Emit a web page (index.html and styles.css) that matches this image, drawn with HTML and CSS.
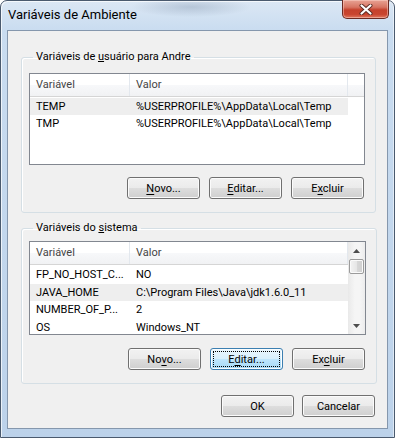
FILE: index.html
```html
<!DOCTYPE html>
<html lang="pt-BR">
<head>
<meta charset="utf-8">
<title>Variáveis de Ambiente</title>
<link rel="stylesheet" href="styles.css">
</head>
<body>
<div class="window">
  <div class="titlebar">
    <span class="title">Variáveis de Ambiente</span>
    <button class="close" aria-label="Fechar">
      <svg width="14" height="11" viewBox="0 0 14 11">
        <path d="M2.5 1.5 L11.5 9.5 M11.5 1.5 L2.5 9.5" stroke="#5a2a22" stroke-width="4" stroke-linecap="round"/>
        <path d="M2.5 1.5 L11.5 9.5 M11.5 1.5 L2.5 9.5" stroke="#ffffff" stroke-width="2.2" stroke-linecap="round"/>
      </svg>
    </button>
  </div>
  <div class="client">
    <fieldset class="group group-user">
      <legend>Variáveis de <u>u</u>suário para Andre</legend>
      <div class="list list-user">
        <div class="lv-main">
          <div class="lv-header">
            <div class="hc c1">Variável</div>
            <div class="hc c2">Valor</div>
          </div>
          <div class="lv-body">
            <div class="row sel"><span class="c1">TEMP</span><span class="c2">%USERPROFILE%\AppData\Local\Temp</span></div>
            <div class="row"><span class="c1">TMP</span><span class="c2">%USERPROFILE%\AppData\Local\Temp</span></div>
          </div>
        </div>
      </div>
      <div class="btnrow">
        <button class="btn"><u>N</u>ovo...</button>
        <button class="btn"><u>E</u>ditar...</button>
        <button class="btn">E<u>x</u>cluir</button>
      </div>
    </fieldset>

    <fieldset class="group group-sys">
      <legend>Variáveis do <u>s</u>istema</legend>
      <div class="list list-sys">
        <div class="lv-main">
          <div class="lv-header">
            <div class="hc c1">Variável</div>
            <div class="hc c2">Valor</div>
          </div>
          <div class="lv-body">
            <div class="row"><span class="c1">FP_NO_HOST_C...</span><span class="c2">NO</span></div>
            <div class="row sel"><span class="c1">JAVA_HOME</span><span class="c2">C:\Program Files\Java\jdk1.6.0_11</span></div>
            <div class="row"><span class="c1">NUMBER_OF_P...</span><span class="c2">2</span></div>
            <div class="row"><span class="c1">OS</span><span class="c2">Windows_NT</span></div>
          </div>
        </div>
        <div class="scrollbar">
          <div class="sb-arrow">
            <svg width="7" height="4" viewBox="0 0 7 4"><path d="M0 4 L3.5 0 L7 4 Z" fill="#4d4d4d"/></svg>
          </div>
          <div class="sb-track">
            <div class="sb-thumb"></div>
          </div>
          <div class="sb-arrow">
            <svg width="7" height="4" viewBox="0 0 7 4"><path d="M0 0 L7 0 L3.5 4 Z" fill="#4d4d4d"/></svg>
          </div>
        </div>
      </div>
      <div class="btnrow">
        <button class="btn">No<u>v</u>o...</button>
        <button class="btn focus">E<u>d</u>itar...</button>
        <button class="btn">Ex<u>c</u>luir</button>
      </div>
    </fieldset>

    <div class="dlg-buttons">
      <button class="btn">OK</button>
      <button class="btn">Cancelar</button>
    </div>
  </div>
</div>
</body>
</html>
```

FILE: styles.css
```css
html, body {
  margin: 0;
  padding: 0;
  background: #ffffff;
}

body {
  font-family: Roboto, "Open Sans", sans-serif;
  font-size: 11px;
  color: #000;
}

.window {
  width: 395px;
  height: 438px;
  box-sizing: border-box;
  border: 1px solid #4a5a6e;
  border-radius: 7px 7px 0 0;
  background:
    radial-gradient(ellipse 60px 10px at 190px 6px, rgba(120,140,165,0.35), rgba(120,140,165,0) 100%),
    linear-gradient(180deg, #dbe7f4 0px, #c9dcf0 30px, #bcd2ea 100%);
  box-shadow: inset 1px 1px 0 rgba(255,255,255,0.7), inset -1px 0 0 rgba(255,255,255,0.5);
  display: flex;
  flex-direction: column;
}

.titlebar {
  height: 29px;
  display: flex;
  align-items: flex-start;
  justify-content: space-between;
}

.title {
  font-size: 13px;
  padding: 6px 0 0 7px;
  color: #000;
}

.close {
  width: 47px;
  height: 19px;
  margin: -1px 5px 0 0;
  padding: 0;
  border: 1px solid #6b2a22;
  border-top: none;
  border-radius: 0 0 5px 5px;
  background: linear-gradient(180deg, #e8a394 0%, #d77563 40%, #c5412c 55%, #c9452f 80%, #e0785f 100%);
  box-shadow: inset 0 0 0 1px rgba(255,220,210,0.45);
  display: flex;
  align-items: center;
  justify-content: center;
}

.client {
  flex: 1;
  margin: 0 6px 8px 6px;
  border: 1px solid #8597ad;
  background: #f0f0f0;
  display: flex;
  flex-direction: column;
  padding: 18px 11px 11px 13px;
}

.group {
  margin: 0;
  padding: 0 10px 13px 7px;
  border: 1px solid #d5dfe5;
  border-radius: 3px;
  box-shadow: inset 1px 1px 0 #ffffff;
}

.group legend {
  margin-left: 4px;
  padding: 0 3px;
  line-height: 16px;
  color: #000;
}

.group-sys {
  margin-top: 7px;
}

.list {
  background: #ffffff;
  border: 1px solid #828790;
  display: flex;
}

.list-user {
  margin-top: 8px;
  height: 90px;
}

.list-sys {
  margin-top: 5px;
  height: 92px;
  overflow: hidden;
}

.lv-main {
  flex: 1;
  overflow: hidden;
}

.lv-header {
  display: flex;
  height: 22px;
  border-bottom: 1px solid #d5d5d5;
  background: linear-gradient(180deg, #ffffff 0%, #ffffff 50%, #f7f8fa 50%, #f1f2f4 100%);
}

.hc {
  box-sizing: border-box;
  padding-left: 6px;
  line-height: 22px;
  color: #444444;
  border-right: 1px solid #e3e8ee;
}

.c1 {
  width: 100px;
  box-sizing: border-box;
  padding-left: 6px;
}

.c2 {
  width: 218px;
  box-sizing: border-box;
  padding-left: 6px;
}

.lv-body {
  padding-top: 1px;
}

.row {
  display: flex;
  width: 318px;
  height: 17px;
  line-height: 17px;
  white-space: nowrap;
}

.row.sel {
  background: #eeeeee;
}

.list-sys .row {
  height: 17.5px;
  line-height: 17.5px;
}

.scrollbar {
  width: 17px;
  display: flex;
  flex-direction: column;
  background: linear-gradient(90deg, #e9e9e9, #f5f5f5 40%, #f5f5f5 70%, #ececec);
}

.sb-arrow {
  height: 17px;
  display: flex;
  align-items: center;
  justify-content: center;
}

.sb-track {
  flex: 1;
}

.sb-thumb {
  height: 15px;
  margin: 0 1px;
  border: 1px solid #9b9b9b;
  border-radius: 2px;
  background: linear-gradient(90deg, #f3f3f3, #e6e6e6 50%, #d8d8d8 50%, #cfcfcf);
  box-shadow: inset 0 0 0 1px #fafafa;
  box-sizing: border-box;
}

.btnrow {
  margin-top: 12px;
  display: flex;
  justify-content: flex-end;
  gap: 9px;
  padding-right: 1px;
}

.group-sys .btnrow {
  margin-top: 13px;
}

.btn {
  width: 73px;
  height: 22px;
  padding: 0;
  font-family: inherit;
  font-size: 11px;
  color: #000;
  border: 1px solid #707070;
  border-radius: 3px;
  background: linear-gradient(180deg, #f2f2f2 0%, #ebebeb 48%, #dddddd 52%, #cfcfcf 100%);
  box-shadow: inset 0 0 0 1px #fbfbfb;
}

.btn u {
  text-underline-offset: 2px;
}

.btn.focus {
  border-color: #3c7fb1;
  background: linear-gradient(180deg, #eaf6fd 0%, #d9f0fc 48%, #bee6fd 52%, #a7d9f5 100%);
  box-shadow: inset 0 0 0 1px #fbfdfe;
  outline: 1px dotted #000;
  outline-offset: -4px;
}

.dlg-buttons {
  margin-top: auto;
  display: flex;
  justify-content: flex-end;
  gap: 8px;
  padding-right: 1px;
}

.dlg-buttons .btn {
  width: 73px;
}
```
